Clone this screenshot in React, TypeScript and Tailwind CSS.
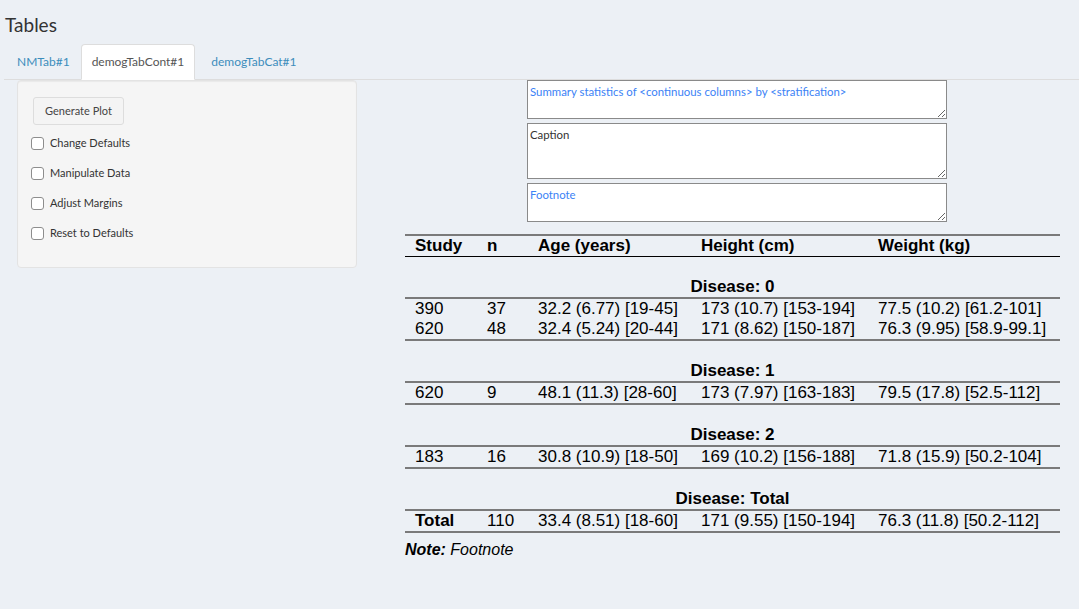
import React from "react";

const cols = [72, 51, 163, 177, 192];

type Row = { cells: string[]; bold?: boolean };
type Group = { title: string; rows: Row[] };

const groups: Group[] = [
  {
    title: "Disease: 0",
    rows: [
      { cells: ["390", "37", "32.2 (6.77) [19-45]", "173 (10.7) [153-194]", "77.5 (10.2) [61.2-101]"] },
      { cells: ["620", "48", "32.4 (5.24) [20-44]", "171 (8.62) [150-187]", "76.3 (9.95) [58.9-99.1]"] },
    ],
  },
  {
    title: "Disease: 1",
    rows: [{ cells: ["620", "9", "48.1 (11.3) [28-60]", "173 (7.97) [163-183]", "79.5 (17.8) [52.5-112]"] }],
  },
  {
    title: "Disease: 2",
    rows: [{ cells: ["183", "16", "30.8 (10.9) [18-50]", "169 (10.2) [156-188]", "71.8 (15.9) [50.2-104]"] }],
  },
  {
    title: "Disease: Total",
    rows: [
      { cells: ["Total", "110", "33.4 (8.51) [18-60]", "171 (9.55) [150-194]", "76.3 (11.8) [50.2-112]"], bold: true },
    ],
  },
];

function Cells({ cells, bold, lh }: { cells: string[]; bold?: boolean; lh: string }) {
  return (
    <div className={`flex ${lh}`}>
      {cells.map((c, i) => (
        <div
          key={i}
          style={{ width: cols[i] }}
          className={`pl-[10px] whitespace-nowrap ${bold && i === 0 ? "font-bold" : ""}`}
        >
          {c}
        </div>
      ))}
    </div>
  );
}

function GrayLine() {
  return <div className="h-[2px] bg-[#7a7a7a]" />;
}

function Checkbox({ label }: { label: string }) {
  return (
    <div className="flex h-[30px] items-center">
      <span className="ml-[13px] h-[13px] w-[13px] rounded-[3px] border border-[#8d8d8d] bg-white" />
      <span className="ml-[6px] text-[11px] text-[#333]">{label}</span>
    </div>
  );
}

export default function App() {
  return (
    <div className="min-h-[609px] w-full bg-[#ecf0f5] font-[Lato,sans-serif] text-[#333]">
      <div className="pl-[5px] pt-[13px] text-[19px] leading-[24px] text-[#333]">Tables</div>
      <div className="ml-[4px] mt-[7px] flex border-b border-[#dddddd] text-[12px]">
        <div className="mr-[2px] h-[35px] border border-transparent pl-[12px] pr-[8px] leading-[33px] text-[#3c8dbc]">
          NMTab#1
        </div>
        <div className="-mb-px mr-[2px] h-[36px] rounded-t-[4px] border border-[#dddddd] border-b-white bg-white px-[10px] leading-[33px] text-[#555]">
          demogTabCont#1
        </div>
        <div className="mr-[2px] h-[35px] border border-transparent px-[13px] leading-[33px] text-[#3c8dbc]">
          demogTabCat#1
        </div>
      </div>
      <div className="flex">
        <div className="w-[360px] shrink-0 pl-[17px]">
          <div className="h-[188px] w-[340px] rounded-[4px] border border-[#e3e3e3] bg-[#f5f5f5] pl-[15px] pt-[16px] shadow-[inset_0_1px_1px_rgba(0,0,0,0.05)]">
            <div className="flex h-[28px] w-[91px] items-center justify-center rounded-[3px] border border-[#dddddd] bg-[#f4f4f4] text-[11px] text-[#444]">
              Generate Plot
            </div>
            <div className="-ml-[15px] mt-[3px] flex flex-col">
              <Checkbox label="Change Defaults" />
              <Checkbox label="Manipulate Data" />
              <Checkbox label="Adjust Margins" />
              <Checkbox label="Reset to Defaults" />
            </div>
          </div>
        </div>
        <div className="flex flex-col">
          <div className="ml-[167px] flex flex-col gap-[4px]">
            <textarea
              defaultValue="Summary statistics of <continuous columns> by <stratification>"
              className="block h-[39px] w-[420px] border border-[#8a8a8a] bg-white px-[2px] pt-[3px] font-[Lato,sans-serif] text-[11.4px] leading-[16px] text-[#3b82f6] outline-none"
            />
            <textarea
              defaultValue="Caption"
              className="block h-[56px] w-[420px] border border-[#8a8a8a] bg-white px-[2px] pt-[3px] font-[Lato,sans-serif] text-[11.4px] leading-[16px] text-[#333] outline-none"
            />
            <textarea
              defaultValue="Footnote"
              className="block h-[39px] w-[420px] border border-[#8a8a8a] bg-white px-[2px] pt-[3px] font-[Lato,sans-serif] text-[11.4px] leading-[16px] text-[#3b82f6] outline-none"
            />
          </div>
          <div className="ml-[45px] mt-[12px] w-[655px] font-['Liberation_Sans',Arial,sans-serif] text-[17px] text-black">
            <GrayLine />
            <div className="font-bold">
              <Cells cells={["Study", "n", "Age (years)", "Height (cm)", "Weight (kg)"]} lh="leading-[20px]" />
            </div>
            <div className="h-px bg-black" />
            {groups.map((g, gi) => (
              <div key={gi}>
                <div className="h-[19px]" />
                <div className="text-center font-bold leading-[21px]">{g.title}</div>
                <GrayLine />
                {g.rows.map((r, ri) => (
                  <Cells key={ri} cells={r.cells} bold={r.bold} lh="leading-[20px]" />
                ))}
                <GrayLine />
              </div>
            ))}
            <div className="mt-[7px] text-[16px] leading-[20px]">
              <span className="font-bold italic">Note:</span> <span className="italic">Footnote</span>
            </div>
          </div>
        </div>
      </div>
    </div>
  );
}
